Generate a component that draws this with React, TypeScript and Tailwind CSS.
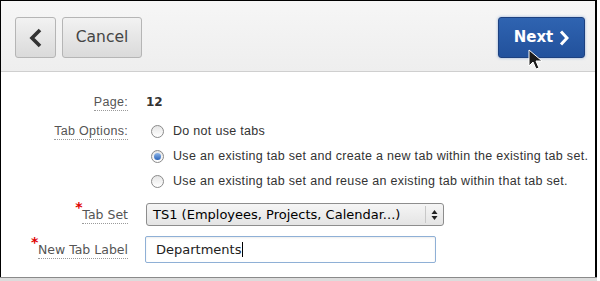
import React from "react";

const Radio = ({ checked }: { checked?: boolean }) => (
  <span className="w-[13px] h-[13px] rounded-full border border-[#8a8a8a] bg-gradient-to-b from-[#e6e6e6] to-white flex items-center justify-center shrink-0">
    {checked && <span className="w-[7px] h-[7px] rounded-full bg-gradient-to-b from-[#8fb6e8] to-[#2a63b8]" />}
  </span>
);

const Label = ({ children, req, className = "" }: { children: React.ReactNode; req?: boolean; className?: string }) => (
  <div className={"w-[127px] shrink-0 flex justify-end " + className}>
    <span className="relative">
      {req && <span className="absolute -left-[7px] -top-[9px] text-[#e00000] text-[14px] font-bold font-['DejaVu_Sans']">*</span>}
      <span className="border-b border-dotted border-[#9a9a9a] pb-[1px]">{children}</span>
    </span>
  </div>
);

export default function App() {
  return (
    <div className="w-[600px] h-[281px] bg-white relative overflow-hidden font-['Liberation_Sans',sans-serif]">
      <div className="w-[597px] h-[277px] border-l border-t border-r-2 border-black flex flex-col bg-white">
        <div className="h-[71px] shrink-0 border-b border-[#cfcfcf] bg-gradient-to-b from-[#f6f6f6] to-[#eeeeee] flex items-start justify-between pl-[14px] pr-[10px] pt-[16px]">
          <div className="flex gap-[6px]">
            <button className="w-[41px] h-[41px] rounded-[3px] border border-[#b5b5b5] bg-gradient-to-b from-[#f2f2f2] to-[#dadada] flex items-center justify-center">
              <svg width="14" height="20" viewBox="0 0 14 20">
                <path d="M11 2 L3 10 L11 18" stroke="#333" strokeWidth="3.6" fill="none" strokeLinejoin="miter" />
              </svg>
            </button>
            <button className="w-[80px] h-[41px] rounded-[3px] border border-[#b5b5b5] bg-gradient-to-b from-[#f2f2f2] to-[#dadada] flex items-center justify-center text-[15.5px] text-[#444] font-['DejaVu_Sans']">
              Cancel
            </button>
          </div>
          <button className="w-[87px] h-[41px] rounded-[3px] border border-[#1d4180] bg-gradient-to-b from-[#2f64b1] to-[#22519c] shadow-[0_0_3px_rgba(80,130,200,0.6)] flex items-center justify-center gap-[6px] text-[15px] text-white font-bold font-['DejaVu_Sans']">
            Next
            <svg width="10" height="16" viewBox="0 0 10 16">
              <path d="M2 1.5 L8 8 L2 14.5" stroke="#fff" strokeWidth="3" fill="none" />
            </svg>
          </button>
        </div>

        <div className="flex flex-col text-[12.5px] text-[#555] tracking-[0.3px]">
          <div className="flex items-center h-[16px] mt-[22px]">
            <Label>Page:</Label>
            <span className="ml-[18px] text-[#333] font-bold font-['DejaVu_Sans'] text-[12px] tracking-normal">12</span>
          </div>

          <div className="flex mt-[9px]">
            <Label className="h-[25px] items-center">Tab Options:</Label>
            <div className="ml-[23px] flex flex-col text-[#333]">
              <div className="h-[25px] flex items-center gap-[9px]"><Radio /> Do not use tabs</div>
              <div className="h-[25px] flex items-center gap-[9px]"><Radio checked /> Use an existing tab set and create a new tab within the existing tab set.</div>
              <div className="h-[25px] flex items-center gap-[9px]"><Radio /> Use an existing tab set and reuse an existing tab within that tab set.</div>
            </div>
          </div>

          <div className="flex items-center h-[23px] mt-[9px] font-['DejaVu_Sans'] tracking-normal">
            <Label req className="text-[12.5px] pt-[2px]">Tab Set</Label>
            <div className="ml-[18px] w-[298px] h-[23px] rounded-[3px] border border-[#8d8d8d] bg-gradient-to-b from-[#f5f5f5] to-[#e4e4e4] flex items-center text-[13px] text-black">
              <span className="flex-1 pl-[6px]">TS1 (Employees, Projects, Calendar...)</span>
              <span className="w-px h-[17px] bg-[#c8c8c8]" />
              <span className="w-[17px] flex items-center justify-center">
                <svg width="7" height="12" viewBox="0 0 7 12">
                  <path d="M0.5 5 L3.5 1 L6.5 5 Z M0.5 7 L3.5 11 L6.5 7 Z" fill="#222" />
                </svg>
              </span>
            </div>
          </div>

          <div className="flex items-center h-[27px] mt-[10px] font-['DejaVu_Sans'] tracking-normal">
            <Label req className="text-[12.5px] pt-[2px]">New Tab Label</Label>
            <div className="ml-[17px] w-[291px] h-[27px] rounded-[2px] border border-[#8fb0d6] bg-white flex items-center text-[13px] text-[#222] pl-[10px] shadow-[inset_0_1px_2px_rgba(0,0,0,0.08)]">
              Departments<span className="w-px h-[15px] bg-black ml-px" />
            </div>
          </div>
        </div>
      </div>
      <div className="w-[597px] h-px bg-[#8a8a8a]" />
      <div className="w-[597px] h-[3px] bg-[#dcdcdc]" />

      <svg className="absolute left-[528px] top-[49px]" width="20" height="24" viewBox="0 0 20 24">
        <path d="M1 1 L1 17 L5 13 L8 20 L11 19 L8 12 L14 12 Z" fill="#1a1a1a" stroke="#fff" strokeWidth="1" />
      </svg>
    </div>
  );
}
